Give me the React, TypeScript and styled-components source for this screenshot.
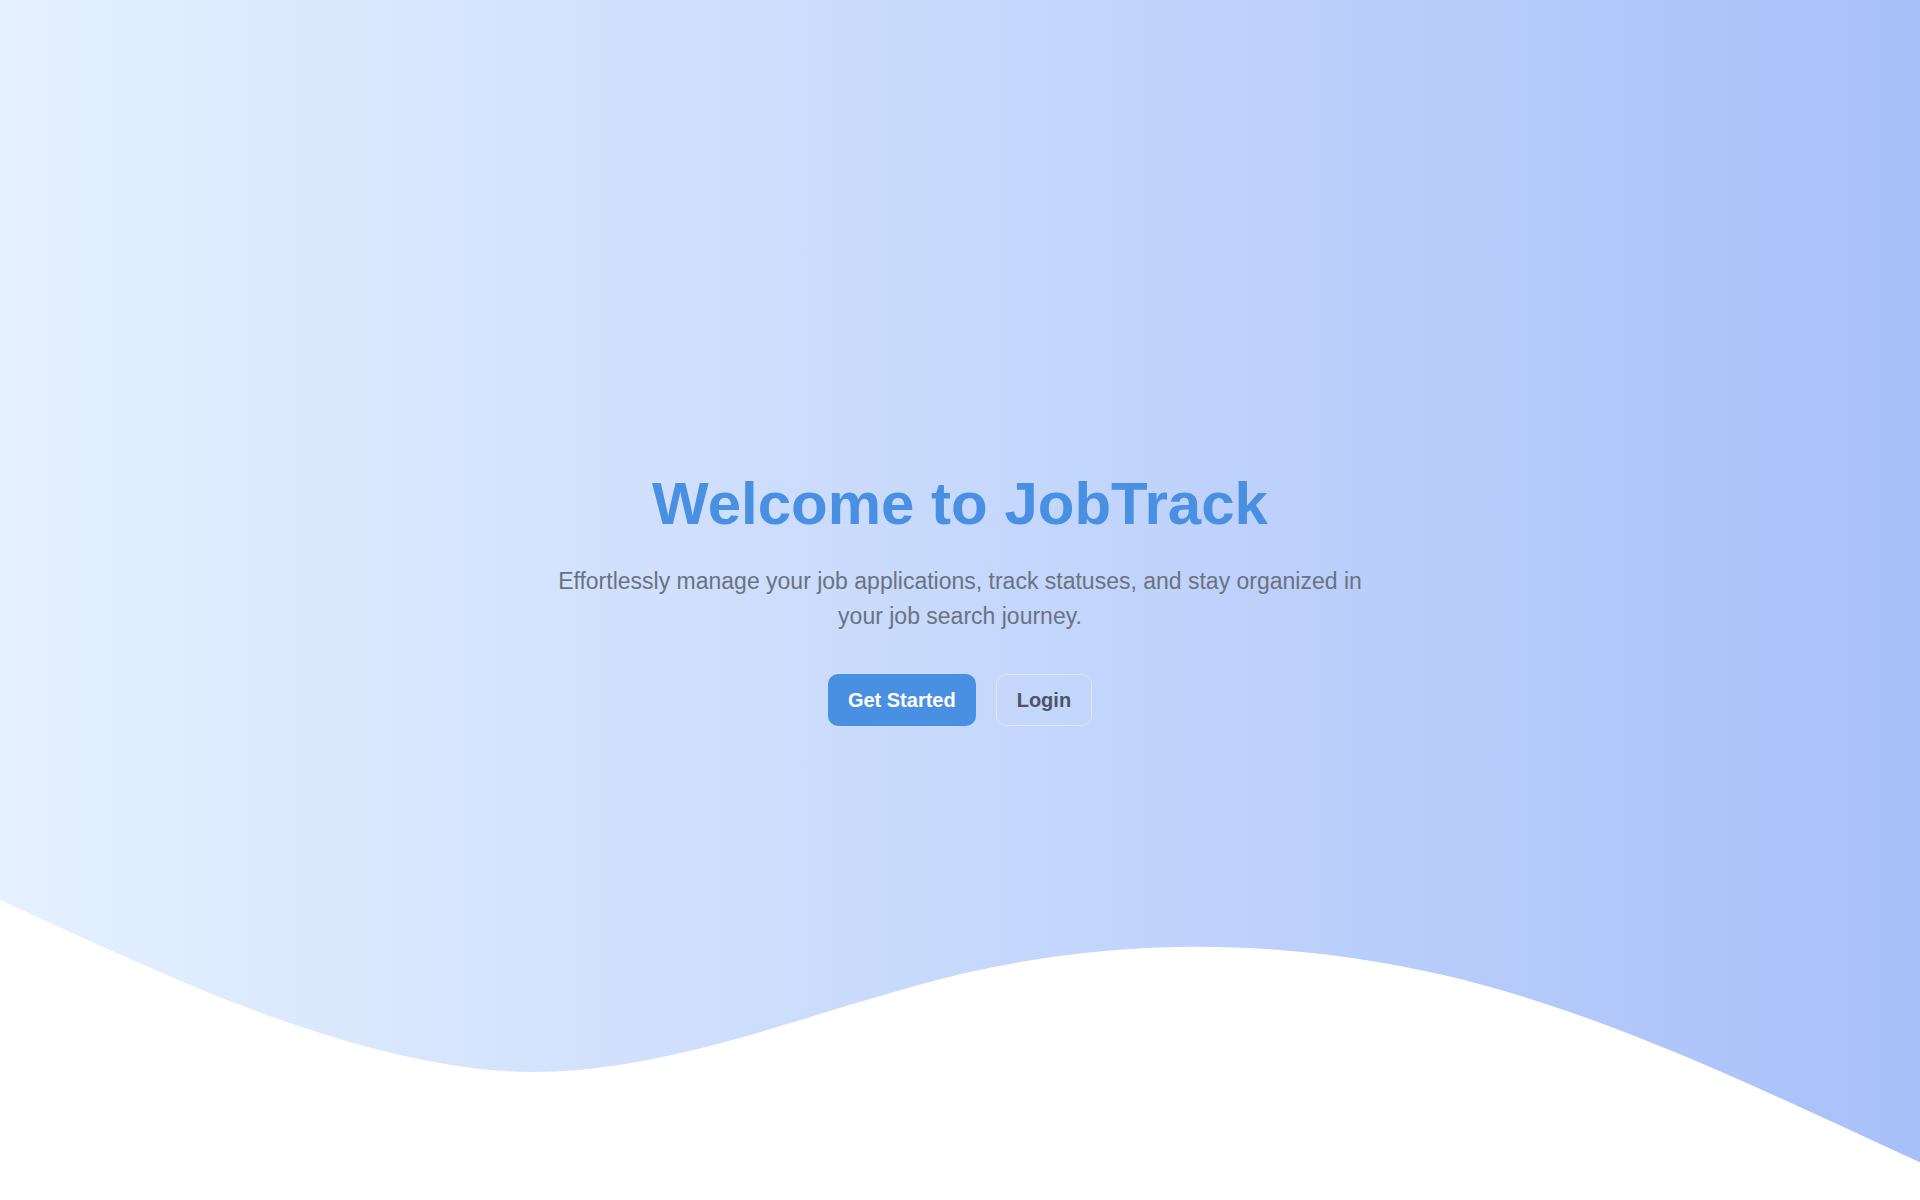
import React from "react";
import styled, { createGlobalStyle } from "styled-components";

const GlobalStyle = createGlobalStyle`
  *, *::before, *::after { box-sizing: border-box; }
  body {
    margin: 0;
    background: #ffffff;
    font-family: "Liberation Sans", Arial, Helvetica, sans-serif;
  }
`;

const Hero = styled.main`
  position: relative;
  display: flex;
  flex-direction: column;
  align-items: center;
  justify-content: center;
  min-height: 100vh;
  overflow: hidden;
  text-align: center;
  background: linear-gradient(to right, #e5f1ff, #a8c0f9);
`;

const Wave = styled.svg`
  position: absolute;
  left: 0;
  bottom: 0;
  display: block;
  width: 100%;
  height: auto;
  overflow: visible;
`;

const Content = styled.section`
  position: relative;
  display: flex;
  flex-direction: column;
  align-items: center;
  padding: 0 20px;
`;

const Title = styled.h1`
  margin: 0 0 30px;
  font-size: 60px;
  line-height: 60px;
  font-weight: 700;
  color: #4a90e2;
`;

const Lead = styled.p`
  margin: 0 0 40px;
  max-width: 840px;
  font-size: 23px;
  line-height: 35px;
  color: #6b7280;
`;

const Actions = styled.div`
  display: flex;
  flex-wrap: wrap;
  justify-content: center;
  gap: 20px;
`;

const Button = styled.button<{ $primary?: boolean }>`
  padding: 10px 20px;
  border: ${(p) => (p.$primary ? "none" : "1px solid #e5e7eb")};
  border-radius: 10px;
  background: ${(p) => (p.$primary ? "#4a90e2" : "transparent")};
  color: ${(p) => (p.$primary ? "#ffffff" : "#4b5563")};
  font-family: inherit;
  font-size: 20px;
  line-height: 30px;
  font-weight: 700;
  cursor: pointer;
`;

export default function App() {
  return (
    <>
      <GlobalStyle />
      <Hero>
        <Wave viewBox="0 0 1440 320" aria-hidden="true">
          <path
            fill="#ffffff"
            d="M0,95C120,150,240,208,360,222C480,236,600,180,720,151C840,123,960,124,1080,151C1200,178,1320,237,1440,292L1440,322L0,322Z"
          />
        </Wave>
        <Content>
          <Title>Welcome to JobTrack</Title>
          <Lead>
            Effortlessly manage your job applications, track statuses, and stay organized in your
            job search journey.
          </Lead>
          <Actions>
            <Button type="button" $primary>
              Get Started
            </Button>
            <Button type="button">Login</Button>
          </Actions>
        </Content>
      </Hero>
    </>
  );
}
